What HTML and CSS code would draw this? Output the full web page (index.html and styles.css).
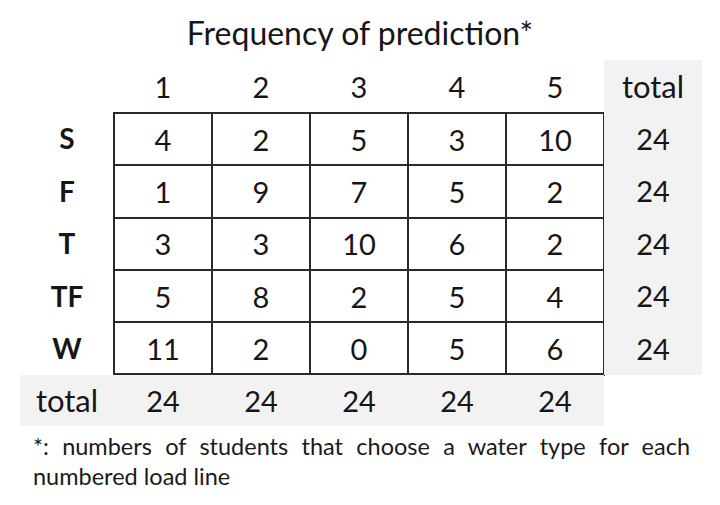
FILE: index.html
```html
<!DOCTYPE html>
<html lang="en">
<head>
<meta charset="utf-8">
<title>Frequency of prediction</title>
<link rel="stylesheet" href="styles.css">
</head>
<body>
<div class="page">
  <div class="title">Frequency of prediction*</div>
  <div class="table">
    <div class="cell"></div>
    <div class="cell">1</div>
    <div class="cell">2</div>
    <div class="cell">3</div>
    <div class="cell">4</div>
    <div class="cell">5</div>
    <div class="cell gray word">total</div>

    <div class="cell label r2">S</div>
    <div class="cell label r3">F</div>
    <div class="cell label r4">T</div>
    <div class="cell label r5">TF</div>
    <div class="cell label r6">W</div>

    <div class="matrix">
      <div class="m">4</div><div class="m">2</div><div class="m">5</div><div class="m">3</div><div class="m">10</div>
      <div class="m">1</div><div class="m">9</div><div class="m">7</div><div class="m">5</div><div class="m">2</div>
      <div class="m">3</div><div class="m">3</div><div class="m">10</div><div class="m">6</div><div class="m">2</div>
      <div class="m">5</div><div class="m">8</div><div class="m">2</div><div class="m">5</div><div class="m">4</div>
      <div class="m">11</div><div class="m">2</div><div class="m">0</div><div class="m">5</div><div class="m">6</div>
    </div>

    <div class="cell gray tc r2">24</div>
    <div class="cell gray tc r3">24</div>
    <div class="cell gray tc r4">24</div>
    <div class="cell gray tc r5">24</div>
    <div class="cell gray tc r6">24</div>

    <div class="cell gray word r7">total</div>
    <div class="cell gray r7">24</div>
    <div class="cell gray r7">24</div>
    <div class="cell gray r7">24</div>
    <div class="cell gray r7">24</div>
    <div class="cell gray r7">24</div>
  </div>
  <p class="note">*: numbers of students that choose a water type for each numbered load line</p>
</div>
</body>
</html>
```

FILE: styles.css
```css
html, body {
  margin: 0;
  padding: 0;
  background: #ffffff;
}

body {
  font-family: Lato, "Open Sans", "Liberation Sans", sans-serif;
  color: #161616;
}

.page {
  width: 720px;
  height: 505px;
  overflow: hidden;
}

.title {
  font-size: 32px;
  line-height: 40px;
  height: 40px;
  padding: 13px 0 7px 0;
  text-align: center;
}

.table {
  margin-left: 20px;
  display: grid;
  grid-template-columns: 94px repeat(5, 98px) 98px;
  grid-template-rows: 52px repeat(5, 52.5px) 51px;
  font-size: 29px;
}

.cell {
  display: flex;
  align-items: center;
  justify-content: center;
}

.word {
  font-size: 31px;
}

.gray {
  background: #f2f2f2;
}

.label {
  grid-column: 1;
  font-weight: 700;
  font-size: 28px;
}

.tc {
  grid-column: 7;
}

.r2 { grid-row: 2; }
.r3 { grid-row: 3; }
.r4 { grid-row: 4; }
.r5 { grid-row: 5; }
.r6 { grid-row: 6; }
.r7 { grid-row: 7; }

.matrix {
  grid-column: 2 / 7;
  grid-row: 2 / 7;
  display: grid;
  grid-template-columns: repeat(5, 1fr);
  grid-template-rows: repeat(5, 1fr);
  gap: 2px;
  padding: 2px;
  margin: 0 -1px -1px -1px;
  background: #2a2a2a;
}

.m {
  background: #ffffff;
  display: flex;
  align-items: center;
  justify-content: center;
}

.note {
  margin: 5px 0 0 33px;
  width: 657px;
  font-size: 23.5px;
  line-height: 30px;
  text-align: justify;
  color: #1a1a1a;
}
```
